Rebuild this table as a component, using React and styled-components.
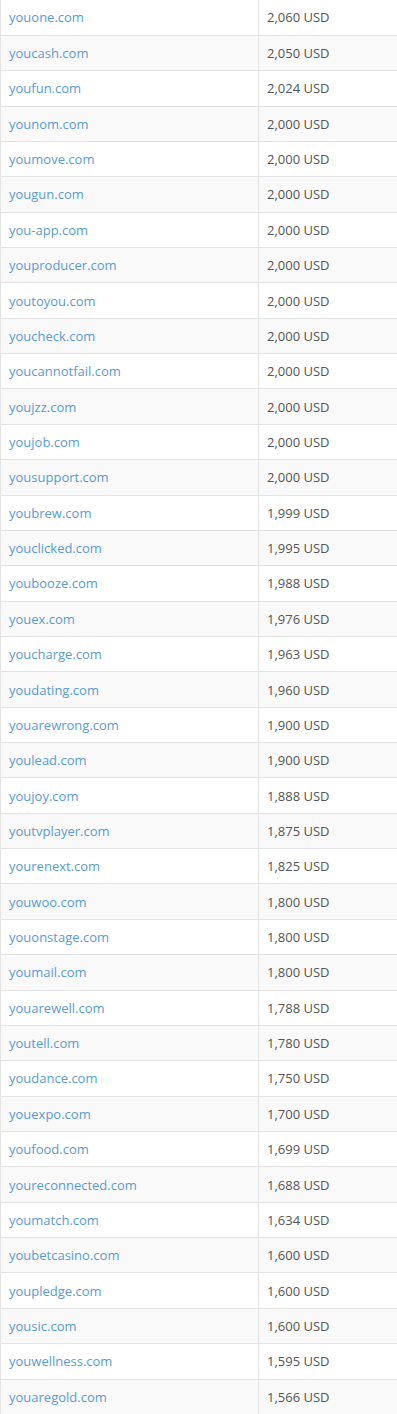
import React from "react";
import styled, { createGlobalStyle } from "styled-components";

const rows = [
  ["youone.com", "2,060"],
  ["youcash.com", "2,050"],
  ["youfun.com", "2,024"],
  ["younom.com", "2,000"],
  ["youmove.com", "2,000"],
  ["yougun.com", "2,000"],
  ["you-app.com", "2,000"],
  ["youproducer.com", "2,000"],
  ["youtoyou.com", "2,000"],
  ["youcheck.com", "2,000"],
  ["youcannotfail.com", "2,000"],
  ["youjzz.com", "2,000"],
  ["youjob.com", "2,000"],
  ["yousupport.com", "2,000"],
  ["youbrew.com", "1,999"],
  ["youclicked.com", "1,995"],
  ["youbooze.com", "1,988"],
  ["youex.com", "1,976"],
  ["youcharge.com", "1,963"],
  ["youdating.com", "1,960"],
  ["youarewrong.com", "1,900"],
  ["youlead.com", "1,900"],
  ["youjoy.com", "1,888"],
  ["youtvplayer.com", "1,875"],
  ["yourenext.com", "1,825"],
  ["youwoo.com", "1,800"],
  ["youonstage.com", "1,800"],
  ["youmail.com", "1,800"],
  ["youarewell.com", "1,788"],
  ["youtell.com", "1,780"],
  ["youdance.com", "1,750"],
  ["youexpo.com", "1,700"],
  ["youfood.com", "1,699"],
  ["youreconnected.com", "1,688"],
  ["youmatch.com", "1,634"],
  ["youbetcasino.com", "1,600"],
  ["youpledge.com", "1,600"],
  ["yousic.com", "1,600"],
  ["youwellness.com", "1,595"],
  ["youaregold.com", "1,566"],
];

const GlobalStyle = createGlobalStyle`
  body {
    margin: 0;
    background: #fff;
    font-family: "Open Sans", "Liberation Sans", sans-serif;
  }
`;

const Table = styled.table`
  width: 398px;
  border-collapse: collapse;
  font-size: 13px;
  color: #555;
`;

const Row = styled.tr`
  background: ${p => (p.striped ? "#f9f9f9" : "#fff")};
`;

const Cell = styled.td`
  height: 35.36px;
  box-sizing: border-box;
  padding: 0 8px;
  line-height: 18px;
  border-bottom: 1px solid #e4e4e4;
  border-left: 1px solid #e4e4e4;
  vertical-align: middle;
  width: ${p => p.w || "auto"};
`;

const DomainLink = styled.a`
  color: #5a9bd3;
  text-decoration: none;
`;

const App = () => (
  <>
    <GlobalStyle />
    <Table>
      <tbody>
        {rows.map(([domain, price], i) => (
          <Row key={domain} striped={i % 2 === 1}>
            <Cell w="258px">
              <DomainLink href="#">{domain}</DomainLink>
            </Cell>
            <Cell>{price} USD</Cell>
          </Row>
        ))}
      </tbody>
    </Table>
  </>
);

export default App;
